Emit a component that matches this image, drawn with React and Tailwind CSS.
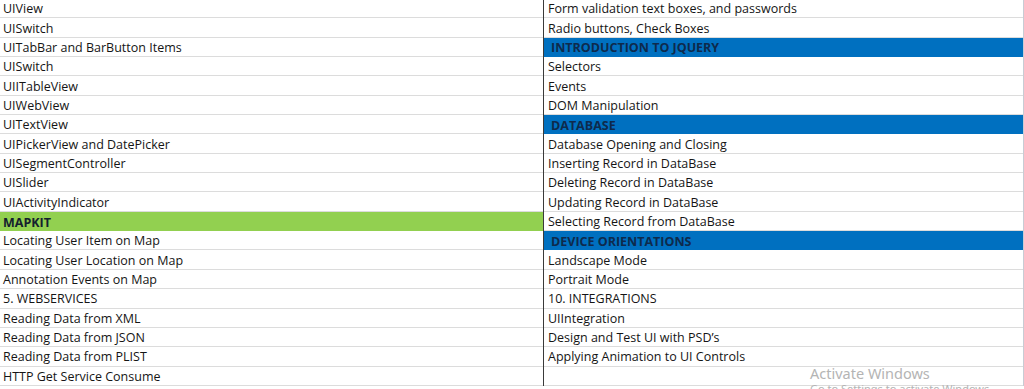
import React from "react";

const rows = [
  ["UIView", "Form validation text boxes, and passwords"],
  ["UISwitch", "Radio buttons, Check Boxes"],
  ["UITabBar and BarButton Items", { head: "INTRODUCTION TO JQUERY" }],
  ["UISwitch", "Selectors"],
  ["UIITableView", "Events"],
  ["UIWebView", "DOM Manipulation"],
  ["UITextView", { head: "DATABASE" }],
  ["UIPickerView and DatePicker", "Database Opening and Closing"],
  ["UISegmentController", "Inserting Record in DataBase"],
  ["UISlider", "Deleting Record in DataBase"],
  ["UIActivityIndicator", "Updating Record in DataBase"],
  [{ green: "MAPKIT" }, "Selecting Record from DataBase"],
  ["Locating User Item on Map", { head: "DEVICE ORIENTATIONS" }],
  ["Locating User Location on Map", "Landscape Mode"],
  ["Annotation Events on Map", "Portrait Mode"],
  ["5. WEBSERVICES", "10. INTEGRATIONS"],
  ["Reading Data from XML", "UIIntegration"],
  ["Reading Data from JSON", "Design and Test UI with PSD’s"],
  ["Reading Data from PLIST", "Applying Animation to UI Controls"],
  ["HTTP Get Service Consume", ""],
];

const LeftCell = ({ value }) => {
  if (typeof value === "object") {
    return (
      <div className="w-[543px] h-full flex items-center pl-[3px] pt-[3px] bg-[#92d050] font-bold text-[#14202e]">
        {value.green}
      </div>
    );
  }
  return (
    <div className="w-[543px] h-full flex items-center pl-[3px] pt-[3px] border-b border-[#dcdcdc]">
      {value}
    </div>
  );
};

const RightCell = ({ value }) => {
  if (typeof value === "object") {
    return (
      <div className="flex-1 h-full flex items-center pl-[7px] pt-[3px] bg-[#0070c0] font-bold text-[#0e2a4c]">
        {value.head}
      </div>
    );
  }
  return (
    <div className="flex-1 h-full flex items-center pl-[4px] pt-[3px] border-b border-[#dcdcdc]">
      {value}
    </div>
  );
};

export default function App() {
  return (
    <div className="relative w-[1024px] h-[389px] overflow-hidden bg-white text-[#151515] text-[12.5px] font-['Open_Sans',sans-serif]">
      <div className="-mt-[1px] flex flex-col">
        {rows.map(([l, r], idx) => (
          <div key={idx} className="flex h-[19.35px]">
            <LeftCell value={l} />
            <div className="w-px h-full bg-[#3a3a3a]" />
            <RightCell value={r} />
            <div className="w-px h-full bg-[#c8ccd4]" />
          </div>
        ))}
      </div>

      <div className="absolute left-[810px] top-[364px] text-[#b4b4b4] font-['Noto_Sans',sans-serif] leading-tight">
        <div className="text-[14.5px]">Activate Windows</div>
        <div className="text-[11px]">Go to Settings to activate Windows.</div>
      </div>
    </div>
  );
}
